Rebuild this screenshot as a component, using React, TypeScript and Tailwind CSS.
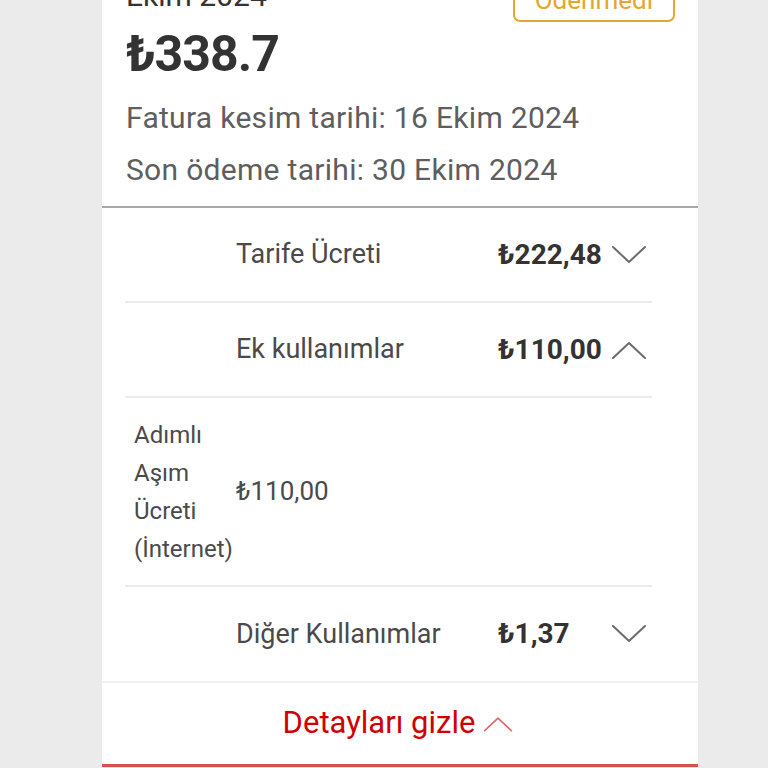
import React from "react";

function Chevron({ up = false, className = "" }: { up?: boolean; className?: string }) {
  return (
    <svg width="36" height="20" viewBox="0 0 36 20" className={className} fill="none">
      <polyline
        points={up ? "2,18 18,3 34,18" : "2,2 18,17 34,2"}
        stroke="currentColor"
        strokeWidth="2"
        strokeLinecap="round"
        strokeLinejoin="round"
      />
    </svg>
  );
}

type Row = { label: string; amount: string; open?: boolean };

function MainRow({ label, amount, open }: Row) {
  return (
    <div className="grid grid-cols-[111px_262px_113px_41px] items-center h-[95px] border-b-2 border-[#ececec]">
      <div />
      <div className="text-[27px] text-[#4a4a4a]">{label}</div>
      <div className="text-[28px] font-bold text-[#333]">{amount}</div>
      <Chevron up={open} className="text-[#6b6b6b]" />
    </div>
  );
}

export default function App() {
  return (
    <div className="h-screen bg-[#ebebeb] pl-[102px] overflow-hidden" style={{ fontFamily: "Roboto, 'Noto Sans', sans-serif" }}>
      <div className="w-[596px] bg-white border-b-[3px] border-[#d65050]">
        {/* header */}
        <div className="px-[24px] mt-[-22px] pb-[10px]">
          <div className="flex justify-between items-start">
            <div className="text-[30px] leading-[36px] text-[#333]">Ekim 2024</div>
            <div className="border-2 border-[#e3a72f] rounded-[7px] px-[20px] h-[44px] flex items-center text-[26px] text-[#e3a72f] mr-[-1px]">
              Ödenmedi
            </div>
          </div>
          <div className="text-[50px] font-bold text-[#333] leading-[66px] mt-[-1px] tracking-[-1px]">₺338.7</div>
          <div className="text-[30px] tracking-[0.3px] text-[#5e5e5e] leading-[52px] mt-[5px]">Fatura kesim tarihi: 16 Ekim 2024</div>
          <div className="text-[30px] tracking-[0.3px] text-[#5e5e5e] leading-[52px]">Son ödeme tarihi: 30 Ekim 2024</div>
        </div>
        <div className="h-[2px] bg-[#a8a8a8]" />

        {/* rows */}
        <div className="pl-[23px] pr-[46px]">
          <MainRow label="Tarife Ücreti" amount="₺222,48" />
          <MainRow label="Ek kullanımlar" amount="₺110,00" open />
          <div className="grid grid-cols-[111px_416px] items-center h-[189px] border-b-2 border-[#ececec]">
            <div className="pl-[9px] text-[24px] leading-[38px] text-[#4a4a4a] break-words">
              Adımlı Aşım Ücreti (İnternet)
            </div>
            <div className="text-[26px] text-[#4a4a4a]">₺110,00</div>
          </div>
          <div className="grid grid-cols-[111px_262px_113px_41px] items-center h-[94px]">
            <div />
            <div className="text-[27px] text-[#4a4a4a]">Diğer Kullanımlar</div>
            <div className="text-[28px] font-bold text-[#333]">₺1,37</div>
            <Chevron className="text-[#6b6b6b]" />
          </div>
        </div>
        <div className="h-[2px] bg-[#f0f0f0]" />

        {/* footer */}
        <div className="h-[81px] flex items-center justify-center gap-[8px] text-[31px] text-[#d00000] pr-[4px]">
          <span>Detayları gizle</span>
          <Chevron up className="text-[#e06a6a] w-[30px]" />
        </div>
      </div>
    </div>
  );
}
